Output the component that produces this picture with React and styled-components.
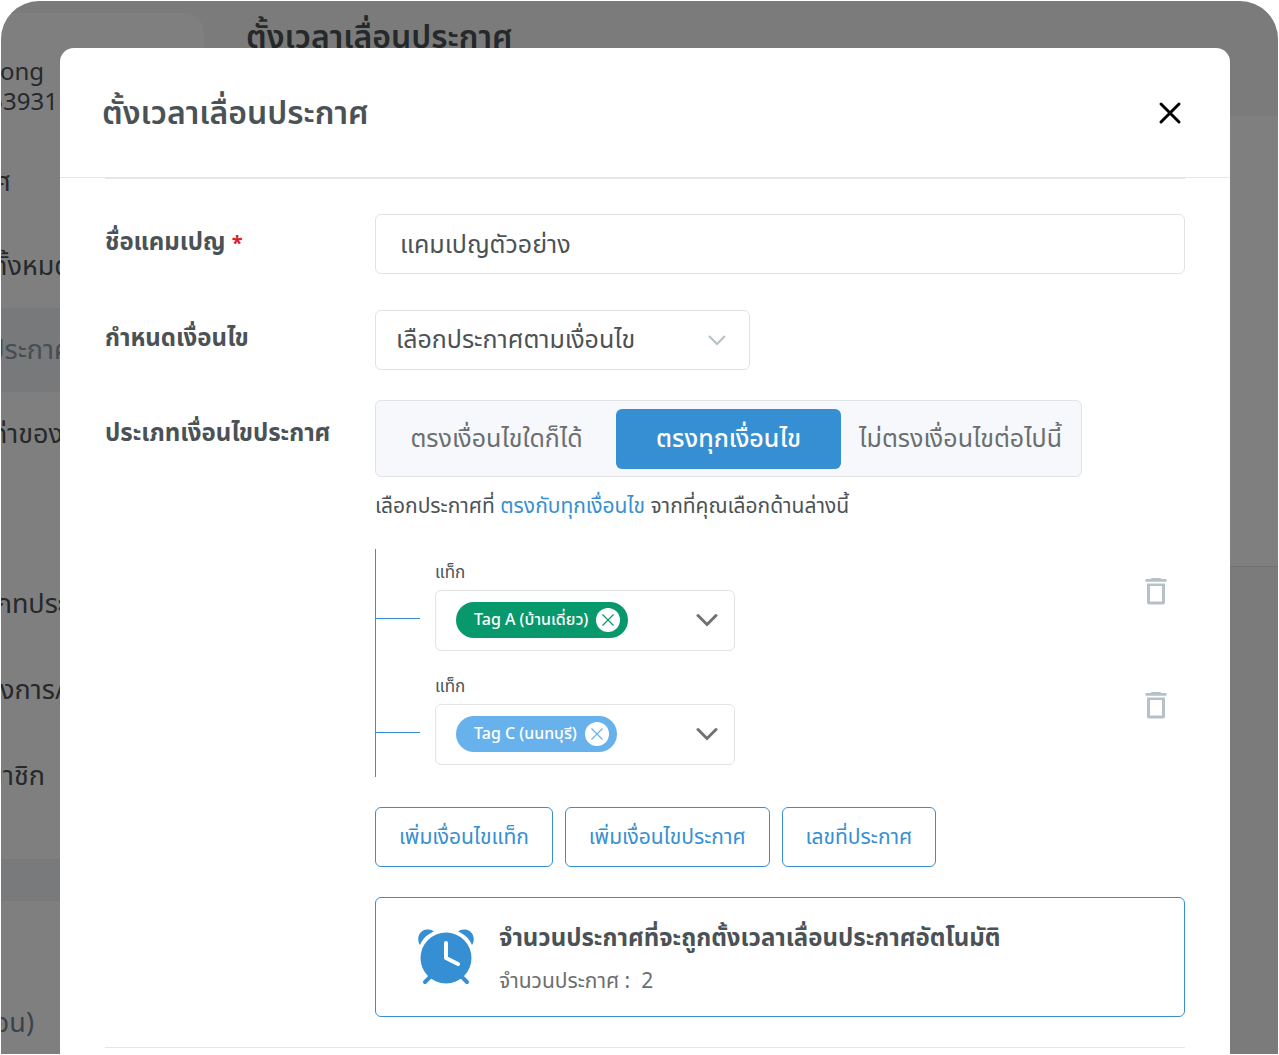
import React, { useState } from "react"
import styled, { createGlobalStyle } from "styled-components"

const menu = [
  { text: "ประกาศ", end: 10 },
  { text: "ทั้งหมด", end: 70 },
  { text: "ประกาศ", end: 70, active: true },
  { text: "ค่าของ", end: 62 },
]

const subMenu = [
  { text: "ประเภทประ", end: 66 },
  { text: "โครงการ/", end: 64 },
  { text: "สมาชิก", end: 44 },
]

const modes = ["ตรงเงื่อนไขใดก็ได้", "ตรงทุกเงื่อนไข", "ไม่ตรงเงื่อนไขต่อไปนี้"]

const tags = [
  { id: "tag-a", text: "Tag A (บ้านเดี่ยว)", color: "#07996b" },
  { id: "tag-c", text: "Tag C (นนทบุรี)", color: "#67b2ec" },
]

const CloseIcon = ({ size, width }) => (
  <svg width={size} height={size} viewBox="0 0 24 24" fill="none" stroke="currentColor" strokeWidth={width} strokeLinecap="round">
    <path d="M3 3l18 18M21 3L3 21" />
  </svg>
)

const TrashIcon = () => (
  <svg width="22" height="28" viewBox="0 0 22 28" fill="currentColor">
    <path d="M6 2V1.500Q6 1 7 1h8q1 0 1 .5V2h5.500v2.800H.5V2z" />
    <path fillRule="evenodd" d="M2 6.500h18v19q0 2-2 2H4q-2 0-2-2zM5 9v15.500h12V9z" />
  </svg>
)

const ClockIcon = () => (
  <svg width="58" height="58" viewBox="0 0 58 58" fill="none" stroke="#378fd3" strokeWidth="4" strokeLinecap="round">
    <path d="M3 17C-1 11 2 2 10 1.500c3-.3 5 .5 7 2C11 6 6 10 3 17zM55 17C59 11 56 2 48 1.500c-3-.3-5 .5-7 2C47 6 52 10 55 17z" fill="#378fd3" stroke="none" />
    <path d="M13 49l-5 5M45 49l5 5" />
    <circle cx="29" cy="30" r="25.500" fill="#378fd3" stroke="none" />
    <path d="M29 15v15l12 6" stroke="#fff" strokeLinejoin="round" />
  </svg>
)

const App = () => {
  const [mode, setMode] = useState(1)

  return (
    <Stage>
      <GlobalStyle />
      <Page aria-hidden="true">
        <Sidebar>
          <Profile>
            <ProfileText $end={43}>Kong</ProfileText>
            <ProfileText $end={57}>53931</ProfileText>
          </Profile>
          {menu.map((item, i) => (
            <MenuRow key={i} $height={84} $active={item.active}>
              <MenuText $end={item.end}>{item.text}</MenuText>
            </MenuRow>
          ))}
          <SubMenu>
            {subMenu.map((item) => (
              <MenuRow key={item.text} $height={86}>
                <MenuText $end={item.end}>{item.text}</MenuText>
              </MenuRow>
            ))}
          </SubMenu>
          <MenuGap />
          <MenuFooter>
            <MenuText $end={33}>ก่อน)</MenuText>
          </MenuFooter>
        </Sidebar>
        <PageMain>
          <PageTitle>ตั้งเวลาเลื่อนประกาศ</PageTitle>
          <PagePanel />
        </PageMain>
      </Page>

      <Backdrop>
        <Modal role="dialog" aria-labelledby="modal-title">
          <ModalHeader>
            <ModalTitle id="modal-title">ตั้งเวลาเลื่อนประกาศ</ModalTitle>
            <CloseButton aria-label="ปิด">
              <CloseIcon size={24} width={3} />
            </CloseButton>
          </ModalHeader>

          <ModalBody>
            <Row $gap={36}>
              <Label htmlFor="campaign">
                ชื่อแคมเปญ <Required>*</Required>
              </Label>
              <TextInput id="campaign" defaultValue="แคมเปญตัวอย่าง" />
            </Row>

            <Row $gap={30}>
              <Label htmlFor="condition">กำหนดเงื่อนไข</Label>
              <SelectWrap>
                <Select id="condition">
                  <option>เลือกประกาศตามเงื่อนไข</option>
                </Select>
                <svg width="18" height="11" viewBox="0 0 18 11" fill="none" stroke="#b5c1c7" strokeWidth="2" strokeLinecap="round">
                  <path d="M1.500 1.500L9 9l7.500-7.500" />
                </svg>
              </SelectWrap>
            </Row>

            <Row $gap={30}>
              <Label as="div" id="mode-label" $tall>
                ประเภทเงื่อนไขประกาศ
              </Label>
              <Column>
                <Segments role="group" aria-labelledby="mode-label">
                  {modes.map((text, i) => (
                    <Segment key={text} $active={mode === i} aria-pressed={mode === i} onClick={() => setMode(i)}>
                      {text}
                    </Segment>
                  ))}
                </Segments>
                <Hint>
                  เลือกประกาศที่ <mark>ตรงกับทุกเงื่อนไข</mark> จากที่คุณเลือกด้านล่างนี้
                </Hint>

                <Tree>
                  {tags.map((tag) => (
                    <Branch key={tag.id}>
                      <BranchLine />
                      <TagField>
                        <TagLabel htmlFor={tag.id}>แท็ก</TagLabel>
                        <TagBox>
                          <Chip $color={tag.color}>
                            {tag.text}
                            <ChipRemove $color={tag.color} aria-label="ลบแท็ก">
                              <CloseIcon size={14} width={2} />
                            </ChipRemove>
                          </Chip>
                          <TagInput id={tag.id} />
                          <IconButton aria-label="เปิดรายการ" $color="#6f7275">
                            <svg width="22" height="14" viewBox="0 0 22 14" fill="none" stroke="currentColor" strokeWidth="3" strokeLinecap="round">
                              <path d="M2 2.500l9 9 9-9" />
                            </svg>
                          </IconButton>
                        </TagBox>
                      </TagField>
                      <IconButton aria-label="ลบเงื่อนไข" $color="#b5c1c7">
                        <TrashIcon />
                      </IconButton>
                    </Branch>
                  ))}
                </Tree>

                <Actions>
                  <OutlineButton>เพิ่มเงื่อนไขแท็ก</OutlineButton>
                  <OutlineButton>เพิ่มเงื่อนไขประกาศ</OutlineButton>
                  <OutlineButton>เลขที่ประกาศ</OutlineButton>
                </Actions>

                <Summary>
                  <ClockIcon />
                  <SummaryBody>
                    <SummaryTitle>จำนวนประกาศที่จะถูกตั้งเวลาเลื่อนประกาศอัตโนมัติ</SummaryTitle>
                    <SummaryText>
                      จำนวนประกาศ :&nbsp; <b>2</b>
                    </SummaryText>
                  </SummaryBody>
                </Summary>
              </Column>
            </Row>
            <Divider />
          </ModalBody>
        </Modal>
      </Backdrop>
    </Stage>
  )
}

export default App

const GlobalStyle = createGlobalStyle`
  * {
    box-sizing: border-box;
  }

  body {
    margin: 0;
    background: #fff;
    color: #4b5256;
  }

  body, button, input, select {
    font-family: "Noto Sans Thai", "Noto Sans", "Open Sans", sans-serif;
  }

  button {
    padding: 0;
    border: 0;
    background: none;
    cursor: pointer;
  }
`

const Stage = styled.div`
  display: grid;
  height: calc(100vh - 2px);
  margin: 1px;
  border-radius: 38px 38px 0 0;
  overflow: hidden;
`

const Page = styled.div`
  grid-area: 1 / 1;
  display: flex;
  min-width: 0;
  min-height: 0;
  overflow: hidden;
  background: #f7f7f7;
`

const Sidebar = styled.div`
  width: 203px;
  margin-top: 12px;
  flex-shrink: 0;
  border-top-right-radius: 20px;
  overflow: hidden;
  background: #fff;
`

const Profile = styled.div`
  height: 127px;
  padding-top: 45px;
  line-height: 30px;
`

const MenuRow = styled.div`
  display: flex;
  align-items: center;
  height: ${({ $height }) => $height}px;
  color: ${({ $active }) => ($active ? "#8e9ba5" : "inherit")};
  background: ${({ $active }) => ($active ? "#eef2f6" : "none")};
`

const MenuText = styled.div`
  display: flex;
  justify-content: flex-end;
  width: ${({ $end }) => $end}px;
  font-size: 27px;
  white-space: nowrap;
`

const ProfileText = styled(MenuText)`
  font-size: 24px;
`

const SubMenu = styled.div`
  padding: 85px 0 40px;
`

const MenuGap = styled.div`
  height: 42px;
  background: #f3f4f6;
`

const MenuFooter = styled.div`
  display: flex;
  align-items: center;
  height: 244px;
  color: #788590;
`

const PageMain = styled.div`
  flex: 1;
`

const PageTitle = styled.div`
  height: 115px;
  padding: 12px 42px;
  font-size: 32px;
  line-height: 50px;
  font-weight: 600;
`

const PagePanel = styled.div`
  height: 451px;
  border-bottom: 1px solid #e0e0e0;
  background: #fff;
`

const Backdrop = styled.div`
  grid-area: 1 / 1;
  z-index: 1;
  min-width: 0;
  min-height: 0;
  padding: 47px 48px 0 59px;
  overflow: hidden;
  background: rgba(0, 0, 0, 0.5);
`

const Modal = styled.div`
  min-height: 100%;
  border-radius: 14px 14px 0 0;
  background: #fff;
`

const ModalHeader = styled.div`
  display: flex;
  justify-content: space-between;
  align-items: center;
  height: 130px;
  padding: 0 48px 0 42px;
  border-bottom: 1px solid #e4e6e8;
`

const ModalTitle = styled.h1`
  margin: 2px 0 0;
  font-size: 32px;
  line-height: 48px;
  font-weight: 600;
`

const CloseButton = styled.button`
  display: flex;
  color: #000;
`

const ModalBody = styled.div`
  margin: 0 45px;
  padding-top: 35px;
  border-top: 1px solid #e4e6e8;
`

const Row = styled.div`
  display: grid;
  grid-template-columns: 270px minmax(0, 1fr);
  align-items: start;
  margin-bottom: ${({ $gap }) => $gap}px;
`

const Label = styled.label`
  font-size: 24px;
  line-height: ${({ $tall }) => ($tall ? 68 : 58)}px;
  font-weight: 700;
`

const Required = styled.span`
  font-size: 20px;
  color: #e02020;
`

const TextInput = styled.input`
  width: 100%;
  height: 60px;
  padding: 1px 24px 0;
  border: 1px solid #e1e3e5;
  border-radius: 6px;
  font-size: 25px;
  color: #4b5256;
`

const SelectWrap = styled.div`
  display: grid;
  width: 375px;
  align-items: center;

  svg {
    grid-area: 1 / 1;
    justify-self: end;
    margin-right: 24px;
    pointer-events: none;
  }
`

const Select = styled.select`
  grid-area: 1 / 1;
  height: 60px;
  padding: 0 20px;
  appearance: none;
  border: 1px solid #e1e3e5;
  border-radius: 6px;
  background: #fff;
  font-size: 25px;
  color: #4b5256;
`

const Column = styled.div`
  display: flex;
  flex-direction: column;
  align-items: flex-start;
`

const Segments = styled.div`
  display: flex;
  gap: 7px;
  padding: 8px 8px 7px;
  border: 1px solid #e1e3e5;
  border-radius: 6px;
  background: #f6f8fb;
`

const Segment = styled.button`
  width: 225px;
  height: 60px;
  border-radius: 6px;
  font-size: 25px;
  font-weight: ${({ $active }) => ($active ? 500 : 400)};
  white-space: nowrap;
  color: ${({ $active }) => ($active ? "#fff" : "#6b6e70")};
  background: ${({ $active }) => ($active ? "#378fd3" : "transparent")};
`

const Hint = styled.p`
  margin: 15px 0 27px;
  font-size: 21px;
  line-height: 30px;

  mark {
    background: none;
    color: #378fd3;
  }
`

const Tree = styled.div`
  width: 100%;
  border-left: 1px solid #378fd3;
`

const Branch = styled.div`
  display: flex;
  align-items: flex-start;
  height: 114px;

  & > button {
    margin: 28px 18px 0 auto;
  }
`

const BranchLine = styled.div`
  width: 44px;
  height: 1px;
  margin: 69px 15px 0 0;
  background: #378fd3;
`

const TagField = styled.div`
  width: 300px;
  padding-top: 8px;
`

const TagLabel = styled.label`
  display: block;
  font-size: 17px;
  line-height: 33px;
`

const TagBox = styled.div`
  display: flex;
  align-items: center;
  height: 61px;
  padding: 0 16px 1px 20px;
  border: 1px solid #e1e3e5;
  border-radius: 6px;
`

const Chip = styled.span`
  display: flex;
  align-items: center;
  gap: 8px;
  height: 36px;
  padding: 0 8px 0 18px;
  border-radius: 18px;
  font-size: 16px;
  font-weight: 500;
  white-space: nowrap;
  color: #fff;
  background: ${({ $color }) => $color};
`

const ChipRemove = styled.button`
  display: flex;
  justify-content: center;
  align-items: center;
  width: 24px;
  height: 24px;
  border-radius: 50%;
  color: ${({ $color }) => $color};
  background: #fff;
`

const TagInput = styled.input`
  flex: 1;
  min-width: 0;
  border: 0;
  outline: 0;
  background: none;
  font-size: 16px;
`

const IconButton = styled.button`
  display: flex;
  color: ${({ $color }) => $color};
`

const Actions = styled.div`
  display: flex;
  gap: 12px;
  margin: 30px 0;
`

const OutlineButton = styled.button`
  height: 60px;
  padding: 0 23px;
  border: 1px solid #378fd3;
  border-radius: 6px;
  font-size: 21px;
  white-space: nowrap;
  color: #378fd3;
`

const Summary = styled.div`
  display: flex;
  align-items: center;
  gap: 24px;
  width: 100%;
  height: 120px;
  padding: 0 41px;
  border: 1px solid #378fd3;
  border-radius: 6px;
`

const SummaryBody = styled.div`
  padding-top: 4px;
`

const SummaryTitle = styled.h2`
  margin: 0;
  font-size: 24px;
  line-height: 46px;
  font-weight: 700;
`

const SummaryText = styled.p`
  margin: 0;
  font-size: 21px;
  line-height: 40px;
  color: #6b6e70;

  b {
    font-weight: 400;
  }
`

const Divider = styled.hr`
  height: 1px;
  margin: 0;
  border: 0;
  background: #e4e6e8;
`
